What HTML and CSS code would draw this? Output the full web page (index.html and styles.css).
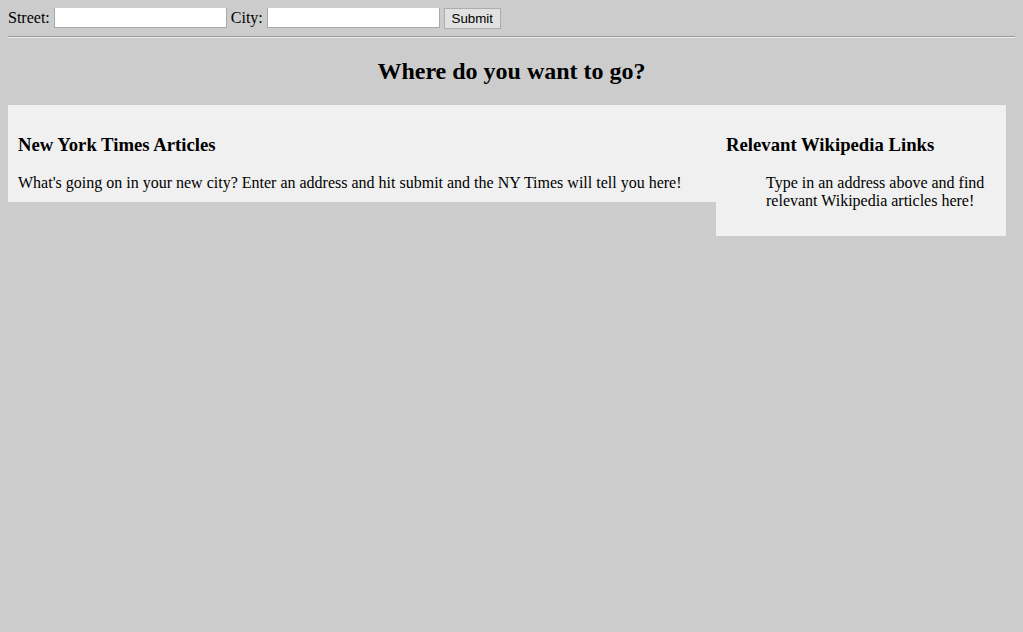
FILE: index.html
```html
<!DOCTYPE html>
<html>
<head>
<meta charset="utf-8">
<title>Move Planner</title>
<link rel="stylesheet" href="styles.css">
</head>
<body>
<form class="form-container">
  <label class="field-label" for="street">Street: </label><input class="text-input" type="text" id="street">
  <label class="field-label" for="city">City: </label><input class="text-input" type="text" id="city">
  <button class="submit-btn" type="button">Submit</button>
</form>
<hr class="divider">
<h2 class="greeting">Where do you want to go?</h2>
<div class="columns">
  <div class="nytimes-container">
    <h3 class="section-header">New York Times Articles</h3>
    <ul class="article-list">What's going on in your new city? Enter an address and hit submit and the NY Times will tell you here!</ul>
  </div>
  <div class="wikipedia-container">
    <h3 class="section-header">Relevant Wikipedia Links</h3>
    <ul class="wiki-list">Type in an address above and find relevant Wikipedia articles here!</ul>
  </div>
</div>
</body>
</html>
```

FILE: styles.css
```css
html, body {
  background-color: #cccccc;
}
body {
  margin: 8px;
  font-family: "Liberation Serif", "Times New Roman", serif;
  font-size: 16px;
  color: #000;
}
.form-container {
  margin: -1px 0 0 0;
  height: 21px;
  display: flex;
  align-items: center;
}
.field-label {
  margin-right: 4px;
  line-height: 18px;
  padding-top: 1px;
}
.text-input {
  box-sizing: border-box;
  width: 173px;
  height: 21px;
  margin: 0 4px 0 0;
  padding: 1px 2px;
  border: 1px solid #a9a9a9;
  background: #fff;
  font-family: "Liberation Sans", Arial, sans-serif;
  font-size: 13.33px;
}
.submit-btn {
  box-sizing: border-box;
  height: 21px;
  width: 57px;
  margin: 1px 0 0 0;
  padding: 1px 6px;
  border: 1px solid #adadad;
  border-radius: 0;
  background: #e1e1e1;
  color: #000;
  font-family: "Liberation Sans", Arial, sans-serif;
  font-size: 13.33px;
}
.divider {
  margin: 8px 0 8px 0;
  border: none;
  border-top: 1px solid #9a9a9a;
  border-bottom: 1px solid #eeeeee;
  height: 0;
}
.greeting {
  text-align: center;
  font-size: 24px;
  font-weight: bold;
  margin: 19px 0 20px 0;
  line-height: 28px;
}
.columns {
  display: flex;
  align-items: flex-start;
}
.nytimes-container {
  width: 688px;
  padding: 10px;
  background-color: #f0f0f0;
}
.wikipedia-container {
  width: 270px;
  padding: 10px;
  background-color: #f0f0f0;
}
.section-header {
  font-size: 18.72px;
  font-weight: bold;
  line-height: 22px;
  margin: 19px 0 18px 0;
}
.article-list {
  list-style: none;
  padding-left: 0;
  margin: 0;
  line-height: 18px;
}
.wiki-list {
  padding-left: 40px;
  margin: 0 0 16px 0;
  line-height: 18px;
}
```
